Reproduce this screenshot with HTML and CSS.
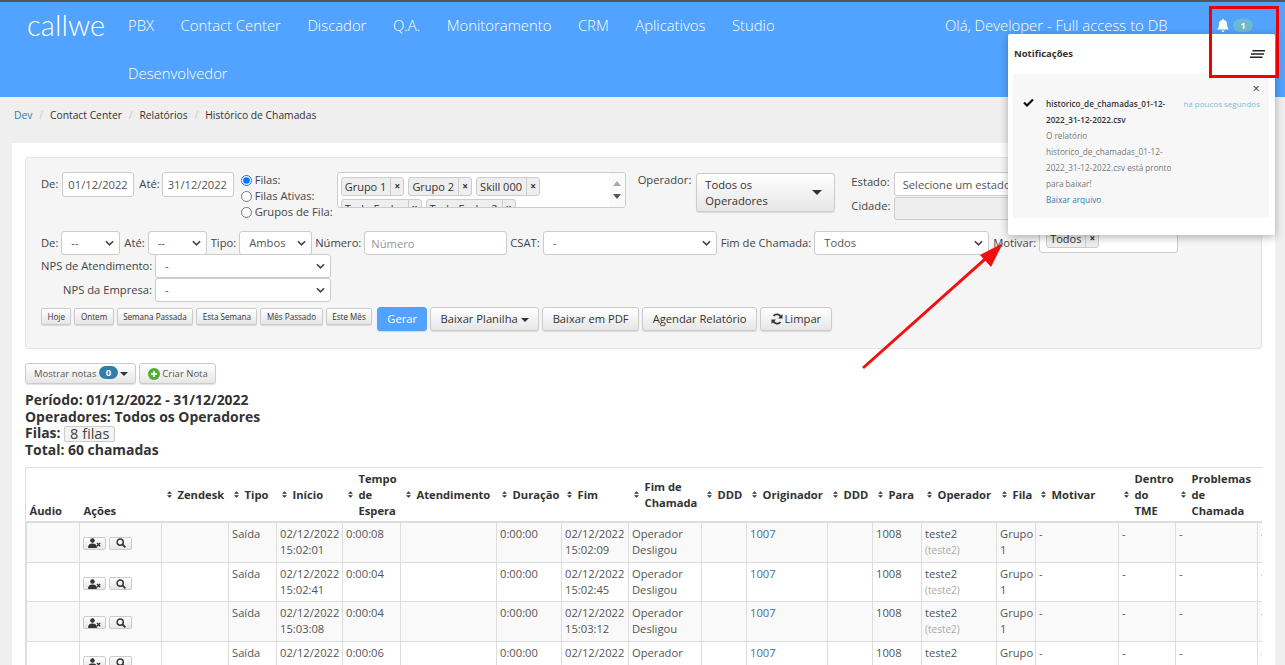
FILE: index.html
```html
<!DOCTYPE html>
<html lang="pt-BR">
<head>
<meta charset="utf-8">
<title>Histórico de Chamadas</title>
<link rel="stylesheet" href="styles.css">
</head>
<body>
<svg class="defs" width="0" height="0">
  <symbol id="sort" viewBox="0 0 6 8"><path d="M3 0 6 3H0zM3 8 0 5h6z" fill="#333"/></symbol>
  <symbol id="userx" viewBox="0 0 16 12"><circle cx="5.5" cy="3" r="2.8" fill="#333"/><path d="M0 12c0-4 2-5.500 5.500-5.500S11 8 11 12z" fill="#333"/><path d="M11 6l4 4M15 6l-4 4" stroke="#333" stroke-width="1.600"/></symbol>
  <symbol id="search" viewBox="0 0 12 12"><circle cx="5" cy="5" r="3.700" fill="none" stroke="#333" stroke-width="1.800"/><path d="M8 8l3.300 3.300" stroke="#333" stroke-width="2.200"/></symbol>
</svg>
<header class="topbar">
  <div class="logo">callwe</div>
  <nav class="mainnav">
    <a>PBX</a><a>Contact Center</a><a>Discador</a><a>Q.A.</a><a>Monitoramento</a><a>CRM</a><a>Aplicativos</a><a>Studio</a><a class="wrapnav">Desenvolvedor</a>
  </nav>
  <div class="greet">Olá, Developer - Full access to DB</div>
  <div class="bellwrap">
    <svg class="bell" viewBox="0 0 12 13"><path d="M6 0c.6 0 1 .4 1 1 2 .4 3 2 3 4 0 3 .8 4 2 5.500H0C1.200 9 2 8 2 5c0-2 1-3.600 3-4 0-.6.400-1 1-1zM4.500 11.500h3C7.500 12.400 6.800 13 6 13s-1.500-.6-1.500-1.500z" fill="#fff"/></svg>
    <span class="bellbadge">1</span>
  </div>
</header>
<div class="crumbs">
  <a class="crumb-link">Dev</a><span class="sep">/</span><span>Contact Center</span><span class="sep">/</span><span>Relatórios</span><span class="sep">/</span><span>Histórico de Chamadas</span>
</div>
<main class="panel">
  <section class="well">
    <div class="frow first">
      <label class="lbl">De:</label><input class="ctl date" value="01/12/2022">
      <label class="lbl">Até:</label><input class="ctl date" value="31/12/2022">
      <div class="radios">
        <label class="radio"><input type="radio" name="f" checked>Filas:</label>
        <label class="radio"><input type="radio" name="f">Filas Ativas:</label>
        <label class="radio"><input type="radio" name="f">Grupos de Fila:</label>
      </div>
      <div class="multi">
        <div class="tags">
          <span class="tag"><b>Grupo 1</b><i>×</i></span><span class="tag"><b>Grupo 2</b><i>×</i></span><span class="tag"><b>Skill 000</b><i>×</i></span>
          <span class="tag"><b>Todo Fecha</b><i>×</i></span><span class="tag"><b>Todo Fecha 2</b><i>×</i></span>
        </div>
        <div class="fakescroll"><span class="up"></span><span class="down"></span></div>
      </div>
      <label class="lbl oplbl">Operador:</label>
      <button class="opbtn"><span>Todos os Operadores</span><span class="caret big"></span></button>
      <div class="geo">
        <div class="georow"><label class="lbl">Estado:</label><div class="ctl geoctl">Selecione um estado</div></div>
        <div class="georow"><label class="lbl">Cidade:</label><div class="ctl geoctl off"></div></div>
      </div>
    </div>
    <div class="frow second">
      <label class="lbl">De:</label><select class="ctl sel w59"><option>--</option></select>
      <label class="lbl">Até:</label><select class="ctl sel w59"><option>--</option></select>
      <label class="lbl">Tipo:</label><select class="ctl sel w73"><option>Ambos</option></select>
      <label class="lbl">Número:</label><input class="ctl num" placeholder="Número">
      <label class="lbl">CSAT:</label><select class="ctl sel w174"><option>-</option></select>
      <label class="lbl">Fim de Chamada:</label><select class="ctl sel w175"><option>Todos</option></select>
      <label class="lbl">Motivar:</label>
      <div class="ctl motivar"><span class="tag"><b>Todos</b><i>×</i></span></div>
    </div>
    <div class="frow nps"><label class="lbl npslbl">NPS de Atendimento:</label><select class="ctl sel w176"><option>-</option></select></div>
    <div class="frow nps"><label class="lbl npslbl">NPS da Empresa:</label><select class="ctl sel w176"><option>-</option></select></div>
    <div class="frow actions">
      <button class="mini">Hoje</button><button class="mini">Ontem</button><button class="mini">Semana Passada</button><button class="mini">Esta Semana</button><button class="mini">Mês Passado</button><button class="mini">Este Mês</button>
      <button class="btn primary">Gerar</button>
      <button class="btn">Baixar Planilha <span class="caret"></span></button>
      <button class="btn">Baixar em PDF</button>
      <button class="btn">Agendar Relatório</button>
      <button class="btn"><svg class="refresh" viewBox="0 0 12 12"><path d="M10 4.500A4.300 4.300 0 0 0 2.500 3M2 7.500A4.300 4.300 0 0 0 9.500 9" fill="none" stroke="#333" stroke-width="1.800"/><path d="M11.500 1v4.500H7zM.5 11V6.500H5z" fill="#333"/></svg>Limpar</button>
    </div>
  </section>
  <div class="notesbar">
    <button class="btn small">Mostrar notas <span class="count">0</span> <span class="caret"></span></button>
    <button class="btn small"><svg class="plus" viewBox="0 0 12 12"><circle cx="6" cy="6" r="6" fill="#4caf30"/><path d="M6 3v6M3 6h6" stroke="#fff" stroke-width="2"/></svg>Criar Nota</button>
  </div>
  <div class="summary">
    <div>Período: 01/12/2022 - 31/12/2022</div>
    <div>Operadores: Todos os Operadores</div>
    <div class="filasline">Filas: <button class="filasbtn">8 filas</button></div>
    <div>Total: 60 chamadas</div>
  </div>
  <div class="tablewrap">
    <table class="grid">
      <colgroup>
        <col class="c53"><col class="c82"><col class="c67"><col class="c48"><col class="c66"><col class="c58"><col class="c96"><col class="c65"><col class="c67"><col class="c73"><col class="c45"><col class="c81"><col class="c45"><col class="c49"><col class="c75"><col class="c39"><col class="c83"><col class="c57"><col class="c82"><col class="c60">
      </colgroup>
      <thead>
        <tr>
          <th>Áudio</th><th>Ações</th>
          <th class="s"><span class="h"><svg class="so"><use href="#sort"/></svg><span>Zendesk</span></span></th>
          <th class="s"><span class="h"><svg class="so"><use href="#sort"/></svg><span>Tipo</span></span></th>
          <th class="s"><span class="h"><svg class="so"><use href="#sort"/></svg><span>Início</span></span></th>
          <th class="s"><span class="h"><svg class="so"><use href="#sort"/></svg><span>Tempo de Espera</span></span></th>
          <th class="s"><span class="h"><svg class="so"><use href="#sort"/></svg><span>Atendimento</span></span></th>
          <th class="s"><span class="h"><svg class="so"><use href="#sort"/></svg><span>Duração</span></span></th>
          <th class="s"><span class="h"><svg class="so"><use href="#sort"/></svg><span>Fim</span></span></th>
          <th class="s"><span class="h"><svg class="so"><use href="#sort"/></svg><span>Fim de Chamada</span></span></th>
          <th class="s"><span class="h"><svg class="so"><use href="#sort"/></svg><span>DDD</span></span></th>
          <th class="s"><span class="h"><svg class="so"><use href="#sort"/></svg><span>Originador</span></span></th>
          <th class="s"><span class="h"><svg class="so"><use href="#sort"/></svg><span>DDD</span></span></th>
          <th class="s"><span class="h"><svg class="so"><use href="#sort"/></svg><span>Para</span></span></th>
          <th class="s"><span class="h"><svg class="so"><use href="#sort"/></svg><span>Operador</span></span></th>
          <th class="s"><span class="h"><svg class="so"><use href="#sort"/></svg><span>Fila</span></span></th>
          <th class="s"><span class="h"><svg class="so"><use href="#sort"/></svg><span>Motivar</span></span></th>
          <th class="s"><span class="h"><svg class="so"><use href="#sort"/></svg><span>Dentro do TME</span></span></th>
          <th class="s"><span class="h"><svg class="so"><use href="#sort"/></svg><span>Problemas de Chamada</span></span></th>
          <th></th>
        </tr>
      </thead>
      <tbody>
        <tr class="odd"><td></td><td class="acts"><span class="ib"><svg class="iu"><use href="#userx"/></svg></span><span class="ib"><svg class="is"><use href="#search"/></svg></span></td><td></td><td>Saída</td><td>02/12/2022 15:02:01</td><td>0:00:08</td><td></td><td>0:00:00</td><td>02/12/2022 15:02:09</td><td>Operador Desligou</td><td></td><td class="blue">1007</td><td></td><td>1008</td><td>teste2<br><small>(teste2)</small></td><td>Grupo 1</td><td>-</td><td>-</td><td>-</td><td>-</td></tr>
        <tr><td></td><td class="acts"><span class="ib"><svg class="iu"><use href="#userx"/></svg></span><span class="ib"><svg class="is"><use href="#search"/></svg></span></td><td></td><td>Saída</td><td>02/12/2022 15:02:41</td><td>0:00:04</td><td></td><td>0:00:00</td><td>02/12/2022 15:02:45</td><td>Operador Desligou</td><td></td><td class="blue">1007</td><td></td><td>1008</td><td>teste2<br><small>(teste2)</small></td><td>Grupo 1</td><td>-</td><td>-</td><td>-</td><td>-</td></tr>
        <tr class="odd"><td></td><td class="acts"><span class="ib"><svg class="iu"><use href="#userx"/></svg></span><span class="ib"><svg class="is"><use href="#search"/></svg></span></td><td></td><td>Saída</td><td>02/12/2022 15:03:08</td><td>0:00:04</td><td></td><td>0:00:00</td><td>02/12/2022 15:03:12</td><td>Operador Desligou</td><td></td><td class="blue">1007</td><td></td><td>1008</td><td>teste2<br><small>(teste2)</small></td><td>Grupo 1</td><td>-</td><td>-</td><td>-</td><td>-</td></tr>
        <tr><td></td><td class="acts"><span class="ib"><svg class="iu"><use href="#userx"/></svg></span><span class="ib"><svg class="is"><use href="#search"/></svg></span></td><td></td><td>Saída</td><td>02/12/2022 15:03:40</td><td>0:00:06</td><td></td><td>0:00:00</td><td>02/12/2022 15:03:46</td><td>Operador Desligou</td><td></td><td class="blue">1007</td><td></td><td>1008</td><td>teste2<br><small>(teste2)</small></td><td>Grupo 1</td><td>-</td><td>-</td><td>-</td><td>-</td></tr>
      </tbody>
    </table>
  </div>
</main>
<aside class="popover">
  <div class="pophead"><strong>Notificações</strong>
    <svg class="lines" viewBox="0 0 15 8"><path d="M2.500 .8H15M1 4H14M0 7.200H12.500" stroke="#222" stroke-width="1.500"/></svg>
  </div>
  <div class="notice">
    <div class="closex">×</div>
    <div class="noticebody">
      <svg class="check" viewBox="0 0 11 9"><path d="M1 4.500 4 7.500 10 1.500" fill="none" stroke="#111" stroke-width="2.200"/></svg>
      <div class="noticetext">
        <div class="fname">historico_de_chamadas_01-12-2022_31-12-2022.csv</div>
        <div>O relatório historico_de_chamadas_01-12-2022_31-12-2022.csv está pronto para baixar!</div>
        <a class="dl">Baixar arquivo</a>
      </div>
      <div class="when">há poucos segundos</div>
    </div>
  </div>
</aside>
<div class="redbox"></div>
<svg class="arrow" viewBox="0 0 150 135"><path d="M5 130 135 14" stroke="#f01010" stroke-width="3"/><path d="M145 5 122 17 133 29z" fill="#f01010"/></svg>
</body>
</html>
```
FILE: styles.css
```css
* { box-sizing: border-box; }
html, body { margin: 0; height: 665px; overflow: hidden; }
body { background: #efefef; font: 11.2px/16px "Open Sans", sans-serif; color: #444; position: relative; }
.defs { position: absolute; }
.topbar { height: 97px; background: #52a3ff; border-top: 2px solid #555; display: flex; color: #fff; align-items: flex-start; }
.logo { width: 128px; padding: 7px 0 0 27px; font: 300 29px/32px "Lato", sans-serif; letter-spacing: 0.1px; }
.mainnav { width: 760px; margin-top: -1px; display: flex; flex-wrap: wrap; column-gap: 26.5px; font: 300 14.85px/48px "Open Sans", sans-serif; }
.wrapnav { flex-basis: 100%; }
.greet { width: 272px; margin-left: 57px; margin-top: -1px; font: 300 14.85px/48px "Open Sans", sans-serif; white-space: nowrap; }
.bellwrap { display: flex; align-items: center; gap: 4px; height: 13px; margin-top: 17px; }
.bell { width: 12px; height: 13px; }
.bellbadge { width: 20px; height: 13px; line-height: 13px; border-radius: 7px; background: #6fb9cf; font-size: 9px; font-weight: 700; text-align: center; }
.crumbs { height: 36px; padding-left: 14px; display: flex; align-items: center; font-size: 10.3px; color: #333; }
.crumb-link { color: #337ab7; }
.sep { color: #ccc; margin: 0 6.9px; }
.panel { margin: 10px 10px 0 12px; background: #fff; height: 540px; padding: 14px 13px 0 13px; overflow: hidden; }
.well { height: 192px; background: #f5f5f5; border: 1px solid #e3e3e3; border-radius: 3px; padding: 14px 0 0 15px; }
.frow { display: flex; }
.first { height: 59px; align-items: flex-start; }
.lbl { white-space: nowrap; }
.ctl { font: 11.2px/16px "Open Sans", sans-serif; color: #555; background: #fff; border: 1px solid #ccc; border-radius: 3px; padding: 0 6px; height: 24px; }
.first > .lbl { margin-right: 4px; padding-top: 4px; }
.date { width: 72px; height: 25px; margin-right: 5px; padding: 0 5px; }
.first > .date + .lbl { margin-right: 2px; }
.first > .date + .lbl + .date { margin-right: 4px; }
.radios { display: flex; flex-direction: column; margin: 0 3px 0 3px; width: 93px; }
.radio { display: flex; align-items: center; height: 16px; gap: 3px; white-space: nowrap; }
.radio input { margin: 0; width: 11px; height: 11px; }
.multi { width: 289px; height: 36px; background: #fff; border: 1px solid #ccc; border-radius: 3px; display: flex; overflow: hidden; margin-right: 12px; }
.tags { flex: 1; padding: 4px 3px; display: flex; flex-wrap: wrap; gap: 3px 4px; align-content: flex-start; }
.tag { display: inline-flex; height: 19px; line-height: 17px; border: 1px solid #ccc; border-radius: 3px; background: #eee; color: #333; font-size: 11px; }
.tag b { font-weight: 400; padding: 0 4px 0 3px; }
.tag i { font-style: normal; font-weight: 700; font-size: 10px; width: 13px; border-left: 1px solid #ccc; text-align: center; }
.fakescroll { width: 16px; background: #fafafa; display: flex; flex-direction: column; align-items: center; justify-content: space-between; padding: 8px 0; }
.up { border: 4px solid transparent; border-top: 0; border-bottom: 5px solid #aaa; }
.down { border: 4px solid transparent; border-bottom: 0; border-top: 5px solid #555; }
.first > .oplbl { padding-top: 0; margin-right: 5px; }
.opbtn { width: 139px; height: 39px; margin-top: 1px; margin-right: 16px; border: 1px solid #ccc; border-radius: 3px; background: linear-gradient(#fff, #e6e6e6); box-shadow: 0 1px 1px rgba(0,0,0,.12); font: 11.2px/16px "Open Sans", sans-serif; color: #333; display: flex; align-items: center; justify-content: space-between; padding: 0 12px 0 8px; text-align: left; }
.opbtn span:first-child { width: 80px; }
.geo { display: flex; flex-direction: column; width: 327px; }
.georow { display: flex; gap: 4px; align-items: center; height: 24px; }
.georow .lbl { margin-top: -4px; }
.geoctl { flex: 0 0 284px; line-height: 23px; padding-left: 8px; }
.off { background: #eee; height: 23px; }
.caret { display: inline-block; border: 4px solid transparent; border-top-color: #333; border-bottom: 0; vertical-align: middle; }
.caret.big { border-width: 5px 5px 0; }
.second { height: 23px; align-items: flex-start; gap: 3px; }
.second .lbl { padding-top: 4px; }
.sel { appearance: none; -webkit-appearance: none; padding: 0 6px 0 9px; background: #fff url("data:image/svg+xml,%3Csvg xmlns='http://www.w3.org/2000/svg' viewBox='0 0 10 6'%3E%3Cpath d='M1 1l4 4 4-4' fill='none' stroke='%23444' stroke-width='1.800'/%3E%3C/svg%3E") no-repeat right 5px center / 9px 6px; }
.w59 { width: 59px; margin-right: 1px; }
.w73 { width: 73px; }
.w174 { width: 174px; margin-right: 1px; }
.w175 { width: 175px; margin-right: 1px; }
.w176 { width: 176px; }
.num { width: 143px; }
.num::placeholder { color: #999; }
.motivar { width: 139px; height: 22px; padding: 0 6px; }
.motivar .tag { vertical-align: top; margin-top: -3px; }
.nps { height: 24px; align-items: center; gap: 3px; }
.npslbl { width: 111px; text-align: right; }
.actions { margin-top: 5px; align-items: flex-start; gap: 3px; height: 24px; }
.mini { height: 17px; margin-top: 1px; padding: 0 5.5px; border: 1px solid #ccc; border-radius: 2px; background: linear-gradient(#fff, #e6e6e6); font: 8.1px/15px "Open Sans", sans-serif; color: #333; box-shadow: 0 1px 1px rgba(0,0,0,.12); }
.btn { height: 24px; padding: 0 9.5px; border: 1px solid #ccc; border-radius: 3px; background: linear-gradient(#fff, #e6e6e6); font: 11.2px/22px "Open Sans", sans-serif; color: #333; box-shadow: 0 1px 1px rgba(0,0,0,.12); white-space: nowrap; }
.primary { background: #52a3ff; border-color: #52a3ff; color: #fff; margin-left: 2px; padding: 0 9px; }
.refresh { width: 12px; height: 12px; vertical-align: -2px; margin-right: 2px; }
.notesbar { display: flex; gap: 3px; margin-top: 14px; }
.btn.small { height: 21px; font-size: 9.500px; line-height: 19px; padding: 0 7px 0 8px; color: #555; }
.count { display: inline-block; width: 19px; height: 13px; line-height: 13px; background: #337ea9; color: #fff; border-radius: 7px; font-weight: 700; text-align: center; vertical-align: 1px; }
.plus { width: 12px; height: 12px; vertical-align: -3px; margin-right: 2px; }
.summary { margin-top: 8px; font: 700 13.95px/16.700px "Open Sans", sans-serif; color: #333; }
.filasline { height: 16.700px; }
.filasbtn { font: 400 14.500px/14px "Open Sans", sans-serif; height: 16px; margin-top: 1px; padding: 0 5px; color: #444; background: #f3f3f3; border: 1px solid #ccc; border-radius: 2px; vertical-align: top; }
.tablewrap { width: 1237px; margin-top: 8px; overflow: hidden; border: 1px solid #ddd; border-right: 0; border-bottom: 0; border-radius: 3px 0 0 0; }
.grid { width: 1291px; table-layout: fixed; border-collapse: collapse; }
.c39 { width: 39px; } .c45 { width: 45px; } .c48 { width: 48px; } .c49 { width: 49px; } .c53 { width: 53px; } .c57 { width: 57px; } .c58 { width: 58px; } .c60 { width: 60px; } .c65 { width: 65px; } .c66 { width: 66px; } .c67 { width: 67px; } .c73 { width: 73px; } .c75 { width: 75px; } .c81 { width: 81px; } .c82 { width: 82px; } .c83 { width: 83px; } .c96 { width: 96px; }
th { vertical-align: bottom; text-align: left; padding: 3px 2px 2px 4px; font-size: 11.2px; line-height: 16px; font-weight: 700; color: #333; border-bottom: 2px solid #ddd; }
th:first-child { padding-left: 3px; }
th.s { vertical-align: middle; padding-left: 5px; }
.h { display: flex; gap: 6px; align-items: center; }
.so { width: 5px; height: 7px; flex: none; }
th.s:nth-child(18) .h span, th.s:nth-child(19) .h span { width: 38px; }
td { vertical-align: top; padding: 3px 3px; font-size: 11.2px; line-height: 16px; height: 40px; border: 1px solid #ddd; color: #555; overflow: hidden; }
tbody tr:nth-child(1) td { height: 41px; }
tbody tr:nth-child(2) td { height: 39px; }
tr.odd td { background: #f9f9f9; }
td small { font-size: 10px; color: #aaa; line-height: 14px; }
.blue { color: #3f6f9f; }
td.acts { padding-top: 8px; padding-left: 3px; white-space: nowrap; }
.ib { display: inline-flex; width: 23px; height: 13px; align-items: center; justify-content: center; margin: 6px 3px 0 0; border: 1px solid #ccc; border-radius: 2px; background: linear-gradient(#fff, #e6e6e6); vertical-align: top; }
.iu { width: 13px; height: 10px; }
.is { width: 10px; height: 10px; }
.popover { position: absolute; left: 1008px; top: 34px; width: 267px; height: 201px; background: #fff; box-shadow: 0 2px 8px rgba(0,0,0,.3); border-radius: 2px; padding: 0 6px 0 5px; }
.pophead { height: 40px; display: flex; align-items: center; justify-content: space-between; padding: 0 4px 0 1px; font-size: 9.500px; color: #333; }
.lines { width: 15px; height: 8px; }
.notice { height: 144px; background: #f7f7f7; border-radius: 3px; padding: 8px 9px 0 10px; position: relative; }
.closex { text-align: right; font-size: 13px; line-height: 13px; color: #444; }
.noticebody { display: flex; margin-top: 1px; }
.check { width: 11px; height: 9px; flex: none; margin: 2px 12px 0 0; }
.noticetext { width: 128px; font-size: 8.200px; line-height: 16px; color: #777; overflow-wrap: anywhere; }
.fname { color: #333; font-weight: 600; }
.dl { color: #337ab7; }
.when { font-size: 8px; line-height: 16px; color: #7fc0dc; white-space: nowrap; margin-left: 10px; }
.redbox { position: absolute; left: 1209px; top: 6px; width: 70px; height: 72px; border: 3.500px solid #f00000; }
.arrow { position: absolute; left: 858px; top: 238px; width: 150px; height: 135px; }
```
